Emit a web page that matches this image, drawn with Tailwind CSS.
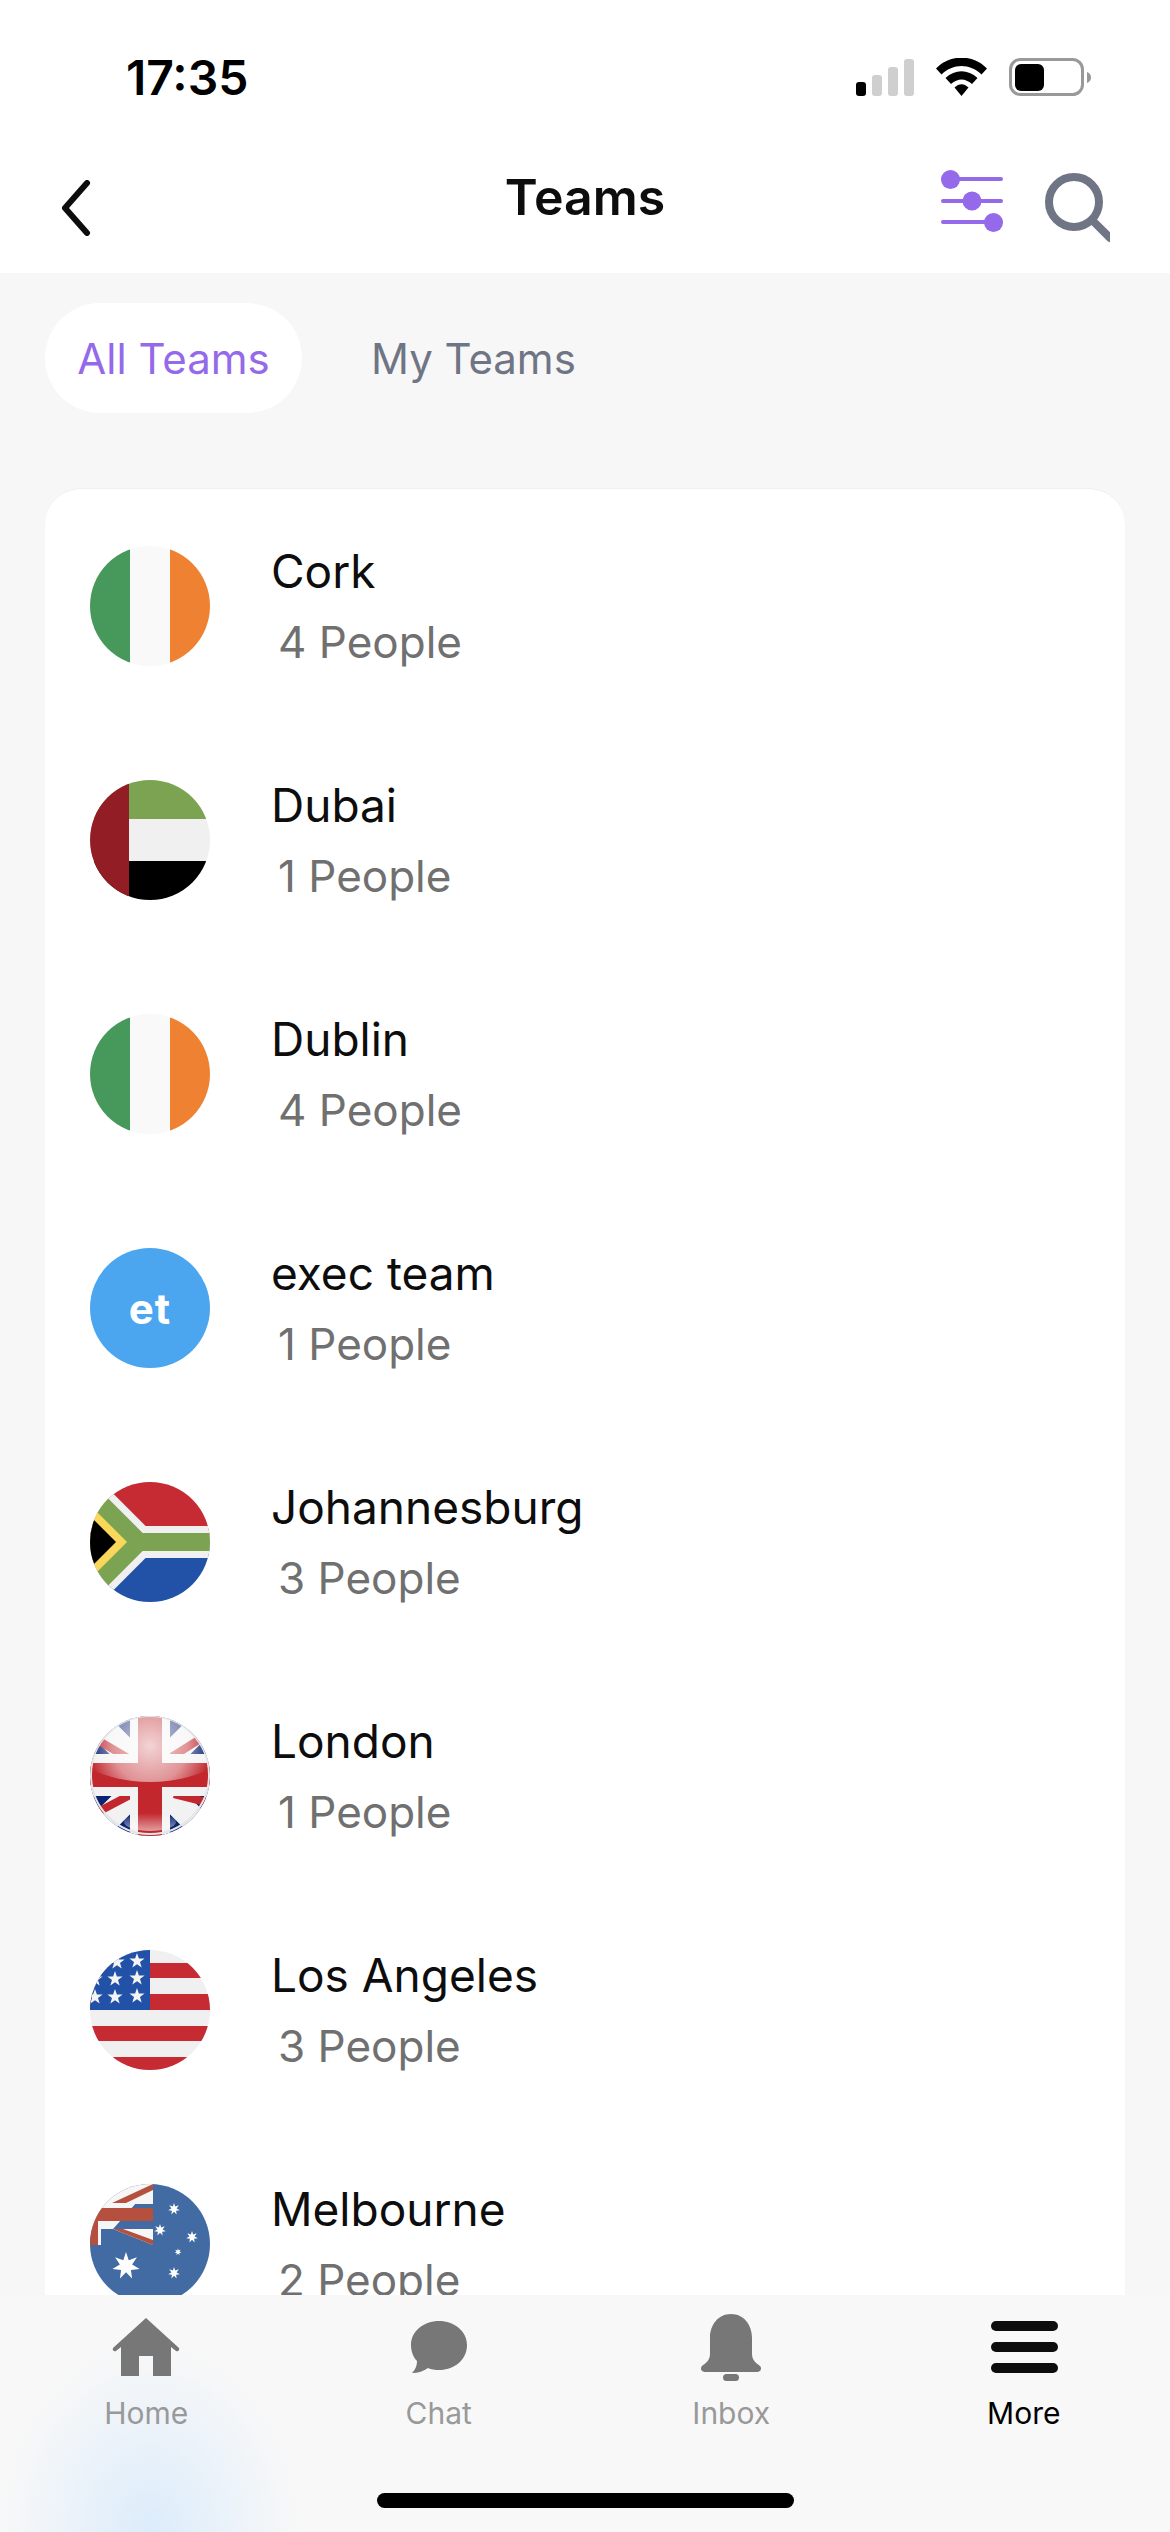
<!DOCTYPE html>
<html lang="en">

<head>
    <meta charset="UTF-8">
    <meta name="viewport" content="width=device-width, initial-scale=1.0">
    <title>Teams</title>
    <script src="https://cdn.jsdelivr.net/npm/@tailwindcss/browser@4"></script>
</head>

<body class="bg-[#f7f7f7] font-['Inter',sans-serif] w-[1170px] h-[2532px] overflow-hidden flex flex-col">
    <!-- Shared star shapes for the flags -->
    <svg class="hidden" width="0" height="0">
        <defs>
            <polygon id="star5" points="0,-8 1.9,-2.5 7.6,-2.5 3,1 4.7,6.5 0,3.2 -4.7,6.5 -3,1 -7.6,-2.5 -1.9,-2.5" fill="#f4f4f4"></polygon>
            <polygon id="star7" points="0,-1 .195,-.405 .782,-.623 .439,-.1 .975,.223 .352,.281 .434,.901 0,.45 -.434,.901 -.352,.281 -.975,.223 -.439,-.1 -.782,-.623 -.195,-.405" fill="#fff"></polygon>
        </defs>
    </svg>

    <!-- Status bar + nav -->
    <header class="bg-white h-[273px] shrink-0 flex flex-col">
        <div class="h-[130px] pl-[126px] pr-[79px] pt-[50px] flex items-start justify-between">
            <span class="text-[48px] leading-[56px] font-semibold text-black">17:35</span>
            <svg width="235" height="38" viewBox="856 58 235 38" class="mt-[8px]">
                <rect x="856" y="82" width="10" height="14" rx="3" fill="#000"></rect>
                <rect x="872" y="75" width="10" height="21" rx="3" fill="#cfcfcf"></rect>
                <rect x="888" y="67" width="10" height="29" rx="3" fill="#cfcfcf"></rect>
                <rect x="904" y="59" width="10" height="37" rx="3" fill="#cfcfcf"></rect>
                <path d="M936 68.5C950 54 973 54 987 68.5L981.500 74.500C970 63 953 63 941.500 74.500Z" fill="#000"></path>
                <path d="M945.500 78C955 69 968 69 977.500 78L972 84C965 78 958 78 951 84Z" fill="#000"></path>
                <path d="M954.500 87.500C959 83 964 83 968.500 87.500L961.500 96Z" fill="#000"></path>
                <rect x="1010.500" y="59.500" width="72" height="35" rx="10" fill="none" stroke="#999" stroke-width="3"></rect>
                <rect x="1015" y="64" width="29" height="27" rx="6" fill="#000"></rect>
                <path d="M1087 72C1090 73 1091 75 1091 77.500C1091 80 1090 82 1087 83Z" fill="#999"></path>
            </svg>
        </div>
        <div class="relative flex-1 flex items-center justify-center">
            <svg width="34" height="56" viewBox="0 0 34 56" class="absolute left-[59px] top-[50px]" fill="none">
                <path d="M28 3L6 28L28 53" stroke="#0d0d0d" stroke-width="6" stroke-linecap="round" stroke-linejoin="round"></path>
            </svg>
            <h1 class="text-[50px] leading-[60px] font-semibold text-[#0d0d0d] -mt-[10px]">Teams</h1>
            <svg width="170" height="80" viewBox="940 165 170 80" class="absolute left-[940px] top-[35px]" fill="none">
                <g stroke="#946aea" stroke-width="4" stroke-linecap="round">
                    <path d="M943 179H1001"></path>
                    <path d="M943 201H1001"></path>
                    <path d="M943 222H1001"></path>
                </g>
                <g fill="#946aea">
                    <circle cx="950.500" cy="179.500" r="9.500"></circle>
                    <circle cx="972" cy="201" r="9.500"></circle>
                    <circle cx="993.500" cy="222.500" r="9.500"></circle>
                </g>
                <circle cx="1074" cy="202" r="25" stroke="#6f7584" stroke-width="8"></circle>
                <path d="M1094 222L1110 238" stroke="#6f7584" stroke-width="8" stroke-linecap="round"></path>
            </svg>
        </div>
    </header>

    <!-- Main -->
    <main class="flex-1 min-h-0 overflow-hidden pt-[30px] px-[45px]">
        <div class="flex items-center h-[110px]">
            <button class="h-[110px] w-[257px] bg-white rounded-[55px] text-[42px] text-[#946aea]">All Teams</button>
            <button class="ml-[69px] text-[42px] text-[#6f7584]">My Teams</button>
        </div>

        <ul class="mt-[75px] bg-white rounded-t-[36px] border-t border-[#efefef]">
            <li class="flex items-center h-[234px] pl-[45px]">
                <div class="w-[120px] h-[120px] rounded-full overflow-hidden shrink-0">
                    <svg width="120" height="120" viewBox="0 0 120 120">
                        <rect width="40" height="120" fill="#46995a"></rect>
                        <rect x="40" width="40" height="120" fill="#f9f9f9"></rect>
                        <rect x="80" width="40" height="120" fill="#ef8232"></rect>
                    </svg>
                </div>
                <div class="ml-[61px] flex flex-col gap-[11px]">
                    <span class="text-[46px] leading-[60px] text-[#0d0d0d]">Cork</span>
                    <span class="text-[44px] leading-[60px] text-[#707070] pl-[7px]">4 People</span>
                </div>
            </li>
            <li class="flex items-center h-[234px] pl-[45px]">
                <div class="w-[120px] h-[120px] rounded-full overflow-hidden shrink-0">
                    <svg width="120" height="120" viewBox="0 0 120 120">
                        <rect width="120" height="39" fill="#7ba352"></rect>
                        <rect y="39" width="120" height="42" fill="#f0f0f0"></rect>
                        <rect y="81" width="120" height="39" fill="#000"></rect>
                        <rect width="39" height="120" fill="#931d24"></rect>
                    </svg>
                </div>
                <div class="ml-[61px] flex flex-col gap-[11px]">
                    <span class="text-[46px] leading-[60px] text-[#0d0d0d]">Dubai</span>
                    <span class="text-[44px] leading-[60px] text-[#707070] pl-[7px]">1 People</span>
                </div>
            </li>
            <li class="flex items-center h-[234px] pl-[45px]">
                <div class="w-[120px] h-[120px] rounded-full overflow-hidden shrink-0">
                    <svg width="120" height="120" viewBox="0 0 120 120">
                        <rect width="40" height="120" fill="#46995a"></rect>
                        <rect x="40" width="40" height="120" fill="#f9f9f9"></rect>
                        <rect x="80" width="40" height="120" fill="#ef8232"></rect>
                    </svg>
                </div>
                <div class="ml-[61px] flex flex-col gap-[11px]">
                    <span class="text-[46px] leading-[60px] text-[#0d0d0d]">Dublin</span>
                    <span class="text-[44px] leading-[60px] text-[#707070] pl-[7px]">4 People</span>
                </div>
            </li>
            <li class="flex items-center h-[234px] pl-[45px]">
                <div class="w-[120px] h-[120px] rounded-full bg-[#4ba6ef] flex items-center justify-center shrink-0">
                    <span class="text-[42px] font-bold text-white tracking-[1px]">et</span>
                </div>
                <div class="ml-[61px] flex flex-col gap-[11px]">
                    <span class="text-[46px] leading-[60px] text-[#0d0d0d]">exec team</span>
                    <span class="text-[44px] leading-[60px] text-[#707070] pl-[7px]">1 People</span>
                </div>
            </li>
            <li class="flex items-center h-[234px] pl-[45px]">
                <div class="w-[120px] h-[120px] rounded-full overflow-hidden shrink-0">
                    <svg width="120" height="120" viewBox="0 0 120 120" fill="none">
                        <rect width="120" height="60" fill="#c62a33"></rect>
                        <rect y="60" width="120" height="60" fill="#2251a8"></rect>
                        <path d="M130 60H49L-11 0M49 60L-11 120" stroke="#f0f0f0" stroke-width="32"></path>
                        <path d="M130 60H49L-11 0M49 60L-11 120" stroke="#7ba352" stroke-width="18"></path>
                        <path d="M0 23L37 60L0 97Z" fill="#f8d75a"></path>
                        <path d="M0 34L26 60L0 86Z" fill="#000"></path>
                    </svg>
                </div>
                <div class="ml-[61px] flex flex-col gap-[11px]">
                    <span class="text-[46px] leading-[60px] text-[#0d0d0d]">Johannesburg</span>
                    <span class="text-[44px] leading-[60px] text-[#707070] pl-[7px]">3 People</span>
                </div>
            </li>
            <li class="flex items-center h-[234px] pl-[45px]">
                <div class="w-[120px] h-[120px] rounded-full overflow-hidden shrink-0">
                    <svg width="120" height="120" viewBox="0 0 120 120" fill="none">
                        <defs>
                            <radialGradient id="ukGloss" cx="60" cy="30" r="62" gradientUnits="userSpaceOnUse">
                                <stop offset="0" stop-color="#fff" stop-opacity=".8"></stop>
                                <stop offset=".6" stop-color="#fff" stop-opacity=".5"></stop>
                                <stop offset="1" stop-color="#fff" stop-opacity="0"></stop>
                            </radialGradient>
                            <linearGradient id="ukLow" x1="0" y1="0" x2="0" y2="1">
                                <stop offset="0" stop-color="#fff" stop-opacity="0"></stop>
                                <stop offset="1" stop-color="#fff" stop-opacity=".55"></stop>
                            </linearGradient>
                        </defs>
                        <rect width="120" height="120" fill="#0c2272"></rect>
                        <path d="M0 0L120 120M120 0L0 120" stroke="#f2f2f2" stroke-width="26"></path>
                        <path d="M4 22L38 42M118 18L80 42M4 98L42 78M116 86L84 78" stroke="#c1272d" stroke-width="8"></path>
                        <rect x="40" width="40" height="120" fill="#f2f2f2"></rect>
                        <rect y="38" width="120" height="42" fill="#f2f2f2"></rect>
                        <rect x="48" width="24" height="120" fill="#c1272d"></rect>
                        <rect y="47" width="120" height="24" fill="#c1272d"></rect>
                        <ellipse cx="60" cy="0" rx="100" ry="66" fill="url(#ukGloss)"></ellipse>
                        <ellipse cx="60" cy="106" rx="26" ry="9" fill="url(#ukLow)"></ellipse>
                        <circle cx="60" cy="59" r="59" stroke="#e6e6e6" stroke-width="2"></circle>
                    </svg>
                </div>
                <div class="ml-[61px] flex flex-col gap-[11px]">
                    <span class="text-[46px] leading-[60px] text-[#0d0d0d]">London</span>
                    <span class="text-[44px] leading-[60px] text-[#707070] pl-[7px]">1 People</span>
                </div>
            </li>
            <li class="flex items-center h-[234px] pl-[45px]">
                <div class="w-[120px] h-[120px] rounded-full overflow-hidden shrink-0">
                    <svg width="120" height="120" viewBox="0 0 120 120">
                        <rect width="120" height="120" fill="#f0f0f0"></rect>
                        <g fill="#c62a33">
                            <rect y="13" width="120" height="15"></rect>
                            <rect y="44" width="120" height="16"></rect>
                            <rect y="76" width="120" height="15"></rect>
                            <rect y="107" width="120" height="13"></rect>
                        </g>
                        <rect width="60" height="60" fill="#2251a8"></rect>
                        <use href="#star5" x="47" y="11"></use>
                        <use href="#star5" x="27" y="12"></use>
                        <use href="#star5" x="47" y="28"></use>
                        <use href="#star5" x="25" y="29"></use>
                        <use href="#star5" x="5" y="29"></use>
                        <use href="#star5" x="47" y="46"></use>
                        <use href="#star5" x="25" y="47"></use>
                        <use href="#star5" x="5" y="47"></use>
                    </svg>
                </div>
                <div class="ml-[61px] flex flex-col gap-[11px]">
                    <span class="text-[46px] leading-[60px] text-[#0d0d0d]">Los Angeles</span>
                    <span class="text-[44px] leading-[60px] text-[#707070] pl-[7px]">3 People</span>
                </div>
            </li>
            <li class="flex items-center h-[234px] pl-[45px]">
                <div class="w-[120px] h-[120px] rounded-full overflow-hidden shrink-0">
                    <svg width="120" height="120" viewBox="0 0 120 120">
                        <rect width="120" height="120" fill="#426ba3"></rect>
                        <path d="M0 20H63V0H20L0 12Z" fill="#f6f6f6"></path>
                        <path d="M63 0L18 20H0V45H11V61H3V45H63V61L23 45Z" fill="#f6f6f6"></path>
                        <path d="M63 0L22 19H36L63 6Z" fill="#b5503f"></path>
                        <rect y="24" width="63" height="13" fill="#b5503f"></rect>
                        <rect y="37" width="8" height="24" fill="#b5503f"></rect>
                        <path d="M23 45L63 61V56L33 45Z" fill="#b5503f"></path>
                        <use href="#star7" transform="translate(36 82) scale(14)"></use>
                        <use href="#star7" transform="translate(84 25) scale(6)"></use>
                        <use href="#star7" transform="translate(70 46) scale(6)"></use>
                        <use href="#star7" transform="translate(102 53) scale(6)"></use>
                        <use href="#star7" transform="translate(88 68) scale(3.500)"></use>
                        <use href="#star7" transform="translate(84 89) scale(6)"></use>
                    </svg>
                </div>
                <div class="ml-[61px] flex flex-col gap-[11px]">
                    <span class="text-[46px] leading-[60px] text-[#0d0d0d]">Melbourne</span>
                    <span class="text-[44px] leading-[60px] text-[#707070] pl-[7px]">2 People</span>
                </div>
            </li>
        </ul>
    </main>

    <!-- Bottom tabs -->
    <nav class="relative h-[237px] shrink-0 bg-[#f8f8f8] bg-[radial-gradient(ellipse_150px_190px_at_150px_100%,#dcecfb,#f8f8f8)]">
        <div class="grid grid-cols-4 pt-[19px]">
            <a class="flex flex-col items-center text-[#999999]">
                <svg width="70" height="70" viewBox="0 0 70 70" fill="#777777">
                    <path d="M35 4L68 34C69 36 67 38 65 37L60 33V62H42V42H28V62H10V33L5 37C3 38 1 36 2 34Z"></path>
                </svg>
                <span class="mt-[10px] text-[30px] leading-[38px]">Home</span>
            </a>
            <a class="flex flex-col items-center text-[#999999]">
                <svg width="70" height="70" viewBox="0 0 70 70" fill="#777777">
                    <path d="M35 7C50 7 63 17 63 31C63 46 50 56 35 56C31 56 27 55.500 24 54C20 57 14 59 8 59C12 55 13 51 13 47C9 43 7 37 7 31C7 17 20 7 35 7Z"></path>
                </svg>
                <span class="mt-[10px] text-[30px] leading-[38px]">Chat</span>
            </a>
            <a class="flex flex-col items-center text-[#999999]">
                <svg width="70" height="70" viewBox="0 0 70 70" fill="#777777">
                    <path d="M35 0C48 0 56 11 56 24V40C56 46 60 49 64 52C66 54 65 58 61 58H9C5 58 4 54 6 52C10 49 14 46 14 40V24C14 11 22 0 35 0Z"></path>
                    <rect x="27" y="60" width="16" height="7" rx="3.500"></rect>
                </svg>
                <span class="mt-[10px] text-[30px] leading-[38px]">Inbox</span>
            </a>
            <a class="flex flex-col items-center text-black">
                <svg width="70" height="70" viewBox="0 0 70 70" fill="#0d0d0d">
                    <rect x="2" y="7" width="67" height="10" rx="5"></rect>
                    <rect x="2" y="28" width="67" height="10" rx="5"></rect>
                    <rect x="2" y="49" width="67" height="10" rx="5"></rect>
                </svg>
                <span class="mt-[10px] text-[30px] leading-[38px]">More</span>
            </a>
        </div>
        <!-- home indicator -->
        <div class="absolute left-[377px] bottom-[24px] w-[417px] h-[15px] rounded-full bg-black"></div>
    </nav>
</body>

</html>
